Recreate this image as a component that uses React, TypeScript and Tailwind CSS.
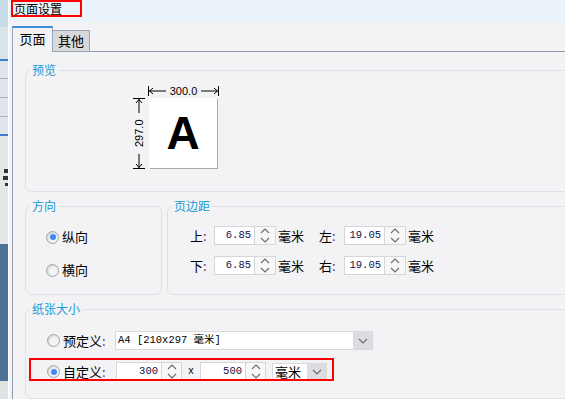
import React from "react";

const cjk = "font-['Noto_Sans_CJK_SC','Liberation_Sans',sans-serif]";
const mono = "font-['Liberation_Mono','Noto_Sans_CJK_SC',monospace]";

function Chevron({ up = false }: { up?: boolean }) {
  return (
    <svg width="10" height="6" viewBox="0 0 10 6" className="block">
      <polyline
        points={up ? "1,5 5,1 9,5" : "1,1 5,5 9,1"}
        fill="none"
        stroke="#6a6a6a"
        strokeWidth="1.1"
      />
    </svg>
  );
}

function Spinner({ w }: { w: string }) {
  return (
    <div className={`flex h-full ${w} flex-col border border-l-0 border-[#d6d6da] bg-[#f7f7f8]`}>
      <div className="flex flex-1 items-center justify-center">
        <Chevron up />
      </div>
      <div className="flex flex-1 items-center justify-center">
        <Chevron />
      </div>
    </div>
  );
}

function NumField({ value, w, sw }: { value: string; w: string; sw: string }) {
  return (
    <div className="flex h-[19px]">
      <div
        className={`${w} flex items-center justify-end border border-[#d6d6da] bg-white pr-[3px] text-[10.5px] text-[#10104a] ${mono}`}>
        {value}
      </div>
      <Spinner w={sw} />
    </div>
  );
}

function Radio({ checked = false }: { checked?: boolean }) {
  return (
    <span className="flex h-[13px] w-[13px] shrink-0 items-center justify-center rounded-full border border-[#a5a5a5] bg-[#f4f4f4] shadow-[inset_1px_1px_2px_#cfcfcf]">
      {checked && <span className="h-[6px] w-[6px] rounded-full bg-[#3d89ef]" />}
    </span>
  );
}

function Label({ text, w }: { text: string; w: string }) {
  return (
    <span className={`${w} shrink-0 text-[13px] leading-none text-black ${cjk}`}>
      {text}
      <span className="text-[#5a2d82]">:</span>
    </span>
  );
}

function Group({
  title,
  className,
  children,
}: {
  title: string;
  className: string;
  children?: React.ReactNode;
}) {
  return (
    <fieldset className={`rounded-[6px] border border-[#dfe0e4] ${className}`}>
      <legend className={`ml-[4px] px-[2px] text-[12px] leading-[16px] text-[#169ad8] ${cjk}`}>
        {title}
      </legend>
      {children}
    </fieldset>
  );
}

function TopDim() {
  return (
    <div className="-ml-px flex h-[14px] w-[71px] items-center">
      <svg width="20" height="12" viewBox="0 0 20 12" className="block">
        <line x1="0.5" y1="1" x2="0.5" y2="11" stroke="#000" />
        <line x1="1" y1="6" x2="18" y2="6" stroke="#000" />
        <polyline points="5,3 1.5,6 5,9" fill="none" stroke="#000" />
      </svg>
      <span className="flex-1 text-center font-['Liberation_Sans',sans-serif] text-[11px] leading-none">
        300.0
      </span>
      <svg width="20" height="12" viewBox="0 0 20 12" className="block">
        <line x1="19.5" y1="1" x2="19.5" y2="11" stroke="#000" />
        <line x1="2" y1="6" x2="19" y2="6" stroke="#000" />
        <polyline points="15,3 18.5,6 15,9" fill="none" stroke="#000" />
      </svg>
    </div>
  );
}

function LeftDim() {
  return (
    <div className="flex h-[71px] w-[12px] flex-col items-center">
      <svg width="12" height="16" viewBox="0 0 12 16" className="block">
        <line x1="0" y1="0.5" x2="12" y2="0.5" stroke="#000" />
        <line x1="6" y1="1" x2="6" y2="15" stroke="#000" />
        <polyline points="3,5 6,1.5 9,5" fill="none" stroke="#000" />
      </svg>
      <span className="flex flex-1 rotate-180 items-center justify-center font-['Liberation_Sans',sans-serif] text-[11px] leading-none [writing-mode:vertical-rl]">
        297.0
      </span>
      <svg width="12" height="16" viewBox="0 0 12 16" className="block">
        <line x1="6" y1="1" x2="6" y2="15" stroke="#000" />
        <polyline points="3,11 6,14.5 9,11" fill="none" stroke="#000" />
        <line x1="0" y1="15.5" x2="12" y2="15.5" stroke="#000" />
      </svg>
    </div>
  );
}

function MarginRow(props: { a: string; av: string; b: string; bv: string }) {
  return (
    <div className="flex h-[19px] items-center">
      <Label text={props.a} w="w-[24px]" />
      <NumField value={props.av} w="w-[41px]" sw="w-[21px]" />
      <span className={`ml-[2px] w-[41px] text-[13px] ${cjk}`}>毫米</span>
      <Label text={props.b} w="w-[25px]" />
      <NumField value={props.bv} w="w-[41px]" sw="w-[21px]" />
      <span className={`ml-[2px] text-[13px] ${cjk}`}>毫米</span>
    </div>
  );
}

function Select({ text, box, textClass }: { text: string; box: string; textClass: string }) {
  return (
    <div className={`flex ${box} border border-[#d9d9dc] bg-white`}>
      <div className={`flex flex-1 items-center pl-[2px] ${textClass}`}>{text}</div>
      <div className="flex w-[19px] items-center justify-center bg-[#dcdde0]">
        <Chevron />
      </div>
    </div>
  );
}

function SideStrip() {
  return (
    <div className="flex w-[8px] shrink-0 flex-col">
      <div className="h-[27px] bg-[#c6dde8]" />
      <div className="h-[32px] bg-[#d9e3eb]" />
      <div className="h-[2px] bg-[#3a7fd5]" />
      <div className="h-[17px] bg-[#dde4eb]" />
      <div className="h-px bg-[#a9b3be]" />
      <div className="h-[18px] bg-[#dde4eb]" />
      <div className="h-px bg-[#a9b3be]" />
      <div className="h-[18px] bg-[#dde4eb]" />
      <div className="h-px bg-[#a9b3be]" />
      <div className="h-[17px] bg-[#dde4eb]" />
      <div className="h-[2px] bg-[#3a7fd5]" />
      <div className="flex h-[108px] flex-col items-end bg-[#e4e6ea] pt-[33px]">
        <div className="h-[4px] w-[4px] bg-[#333]" />
        <div className="mt-[3px] h-[4px] w-[5px] bg-[#333]" />
        <div className="mt-[3px] h-[3px] w-[3px] bg-[#333]" />
      </div>
      <div className="h-[137px] bg-[#4b7197]" />
      <div className="flex-1 bg-[#e0e2e6]" />
    </div>
  );
}

export default function App() {
  return (
    <div className="flex h-[399px] w-[565px] overflow-hidden bg-[#f3f3f5] text-black">
      <SideStrip />
      <div className="w-px shrink-0 bg-white" />
      <div className="flex min-w-0 flex-1 flex-col">
        <div className="h-[22px] shrink-0 bg-[#eaf3f9] pl-[2px]">
          <div
            className={`flex h-[17px] w-[71px] items-center border-2 border-[#ff0000] pl-px text-[12px] leading-none ${cjk}`}>
            页面设置
          </div>
        </div>

        <div className="flex flex-1 flex-col pl-[3px] pt-[4px]">
          <div className="flex h-[26px] shrink-0 items-end">
            <div
              className={`flex h-[26px] w-[41px] items-center justify-center border-x border-t-2 border-x-[#9aa5b7] border-t-[#3b8fe0] pb-[2px] text-[13px] ${cjk}`}>
              页面
            </div>
            <div
              className={`flex h-[22px] w-[37px] items-center justify-center border-y border-r border-[#9aa5b7] bg-[#d7d8dc] text-[13px] ${cjk}`}>
              其他
            </div>
            <div className="h-px flex-1 bg-[#8e9ab0]" />
          </div>

          <div className="flex-1 border-l border-[#8e9ab0] pl-[12px] pt-[10px]">
            <Group title="预览" className="h-[130px] w-[580px]">
              <div className="ml-[107px] mt-[6px] grid grid-cols-[16px_70px] grid-rows-[14px_72px]">
                <div />
                <TopDim />
                <LeftDim />
                <div className="flex h-[70px] w-[68px] items-center justify-center bg-white shadow-[1px_1px_0_#a9a9a9]">
                  <span className="font-['Liberation_Sans',sans-serif] text-[46px] font-bold leading-none">
                    A
                  </span>
                </div>
              </div>
            </Group>

            <div className="mt-[6px] flex w-[580px] gap-[5px]">
              <Group title="方向" className="h-[97px] w-[137px] shrink-0">
                <div className="ml-[20px] mt-[13px] flex flex-col gap-[13px]">
                  <div className="flex h-[20px] items-center gap-[3px]">
                    <Radio checked />
                    <span className={`text-[13px] ${cjk}`}>纵向</span>
                  </div>
                  <div className="flex h-[20px] items-center gap-[3px]">
                    <Radio />
                    <span className={`text-[13px] ${cjk}`}>横向</span>
                  </div>
                </div>
              </Group>

              <Group title="页边距" className="h-[97px] flex-1">
                <div className="ml-[22px] mt-[12px] flex flex-col gap-[11px]">
                  <MarginRow a="上" av="6.85" b="左" bv="19.05" />
                  <MarginRow a="下" av="6.85" b="右" bv="19.05" />
                </div>
              </Group>
            </div>

            <Group title="纸张大小" className="mt-[6px] h-[98px] w-[580px]">
              <div className="ml-[21px] mt-[14px] flex flex-col gap-[12px]">
                <div className="flex h-[19px] items-center">
                  <Radio />
                  <span className="ml-[3px]">
                    <Label text="预定义" w="w-[52px] block" />
                  </span>
                  <Select
                    text="A4 [210x297 毫米]"
                    box="h-[19px] w-[258px]"
                    textClass={`text-[10.5px] ${mono}`}
                  />
                </div>
                <div className="relative flex h-[19px] items-center">
                  <Radio checked />
                  <span className="ml-[3px]">
                    <Label text="自定义" w="w-[53px] block" />
                  </span>
                  <NumField value="300" w="w-[46px]" sw="w-[20px]" />
                  <span className={`w-[18px] text-center text-[10px] ${mono}`}>x</span>
                  <NumField value="500" w="w-[46px]" sw="w-[20px]" />
                  <div className="ml-[6px]">
                    <Select text="毫米" box="h-[17px] w-[55px]" textClass={`text-[13px] ${cjk}`} />
                  </div>
                  <div className="absolute left-[-18px] top-[-4px] h-[23px] w-[305px] border-2 border-[#ff0000]" />
                </div>
              </div>
            </Group>
          </div>
        </div>
      </div>
    </div>
  );
}
